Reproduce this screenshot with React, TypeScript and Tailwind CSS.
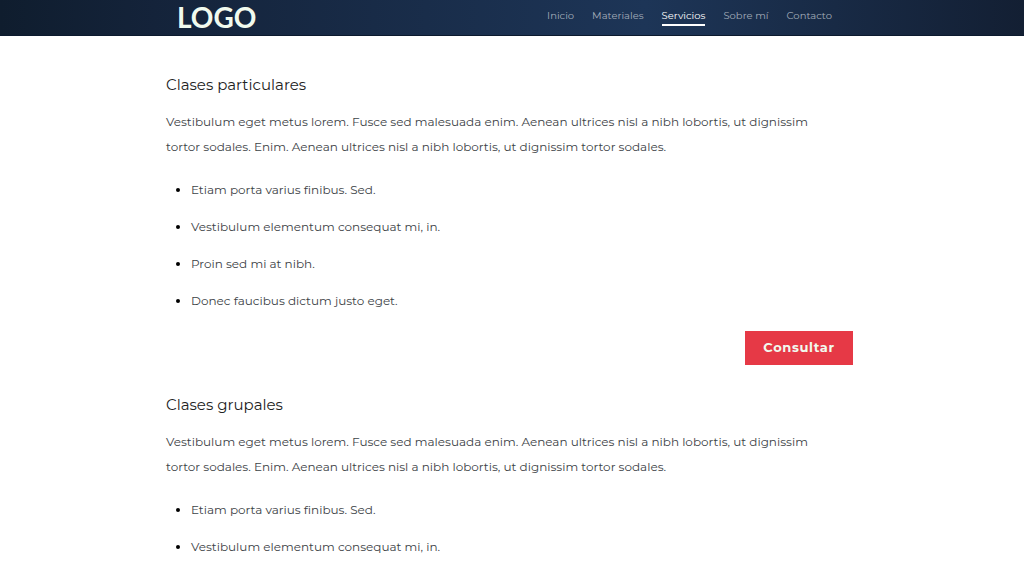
const links = ["Inicio", "Materiales", "Servicios", "Sobre mí", "Contacto"];

const text =
  "Vestibulum eget metus lorem. Fusce sed malesuada enim. Aenean ultrices nisl a nibh lobortis, ut dignissim tortor sodales. Enim. Aenean ultrices nisl a nibh lobortis, ut dignissim tortor sodales.";

const items = [
  "Etiam porta varius finibus. Sed.",
  "Vestibulum elementum consequat mi, in.",
  "Proin sed mi at nibh.",
  "Donec faucibus dictum justo eget.",
];

function Header() {
  return (
    <header className="border-b border-[#0c1a2e] bg-[linear-gradient(90deg,#0f1d2e_0%,#14233a_15%,#1d3557_63%,#131f33_100%)]">
      <div className="mx-auto flex h-[35px] max-w-[692px] items-center justify-between pr-[26px] pl-[11px]">
        <a href="#" className="pb-0.5 font-['Lato',sans-serif] text-[28px] leading-8 font-bold text-[#f1faee]">
          LOGO
        </a>
        <nav className="flex gap-[18px] pb-px text-[10px] leading-4">
          {links.map((label) => (
            <a
              key={label}
              href="#"
              aria-current={label === "Servicios" ? "page" : undefined}
              className={
                label === "Servicios"
                  ? "border-b-2 border-white text-white"
                  : "border-b-2 border-transparent text-[#a2acb9]"
              }
            >
              {label}
            </a>
          ))}
        </nav>
      </div>
    </header>
  );
}

function Service({ title }: { title: string }) {
  return (
    <section className="pb-7">
      <h2 className="text-[15px] leading-6 text-[#222222]">{title}</h2>
      <p className="mt-3 pr-4 text-[12px] leading-[25px] text-[#3c4246]">{text}</p>
      <ul className="mt-[18px] list-disc space-y-3 pl-[25px] text-[12px] leading-[25px] text-[#3c4246] marker:text-black">
        {items.map((item) => (
          <li key={item}>{item}</li>
        ))}
      </ul>
      <div className="mt-[18px] flex justify-end">
        <button
          type="button"
          className="h-[34px] w-[108px] bg-[#e63946] text-[13px] font-bold tracking-wider text-[#f1faee]"
        >
          Consultar
        </button>
      </div>
    </section>
  );
}

export default function App() {
  return (
    <div className="min-h-screen bg-white font-['Montserrat','Inter',sans-serif]">
      <Header />
      <main className="mx-auto max-w-[692px] pt-[37px] pr-[5px]">
        <Service title="Clases particulares" />
        <Service title="Clases grupales" />
      </main>
    </div>
  );
}
